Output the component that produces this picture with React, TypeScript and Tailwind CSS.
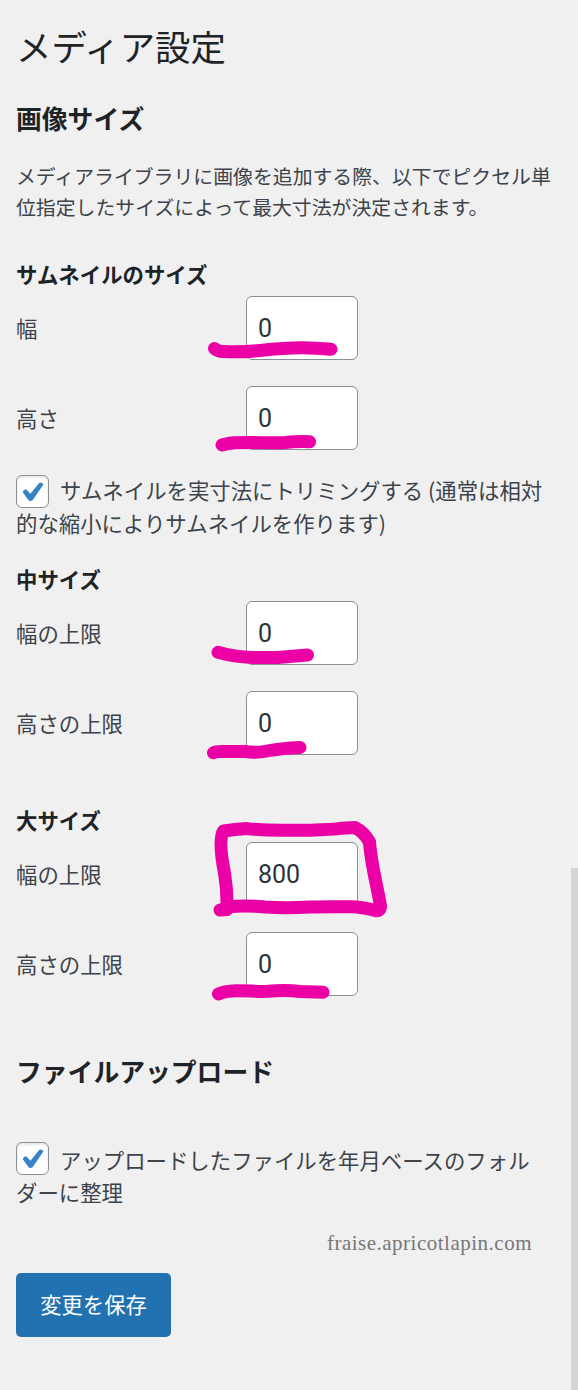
interface SizeFieldProps {
    label: string
    value: string
}

function SizeField({ label, value }: SizeFieldProps) {
    return (
        <label className="flex h-16 items-center">
            <span className="w-[230px] shrink-0 leading-8">{label}</span>
            <input
                type="text"
                defaultValue={value}
                className="h-16 w-[112px] rounded-[6px] border-[1.5px] border-[#8c8f94] bg-white px-[11px] font-[Roboto,sans-serif] text-[25px] text-[#2c3338] outline-none"
            />
        </label>
    )
}

interface SizeGroupProps {
    title: string
    fields: SizeFieldProps[]
}

function SizeGroup({ title, fields }: SizeGroupProps) {
    return (
        <section>
            <h3 className="mb-[6px] text-[21.4px] leading-8 font-bold text-[#1d2327]">{title}</h3>
            <div className="flex flex-col gap-[26px]">
                {fields.map((field) => (
                    <SizeField key={field.label} label={field.label} value={field.value} />
                ))}
            </div>
        </section>
    )
}

function CheckMark() {
    return (
        <span className="mr-[11px] inline-flex h-[33px] w-[33px] items-center justify-center rounded-[6px] border-[1.5px] border-[#8c8f94] bg-white shadow-[inset_0_2px_3px_rgba(0,0,0,0.1)]">
            <svg width="30" height="30" viewBox="0 0 30 30" className="shrink-0">
                <path d="M4.8 15.2 Q5.4 12.4 8.2 12.2 L12.4 16.8 L21.4 5.8 Q24.2 5 25.4 7.6 L14.8 23 Q12.6 25.2 10.4 23 Z" fill="#3582c4" />
            </svg>
        </span>
    )
}

/* Marker strokes drawn over the fields */
const strokes = [
    "M214.5 348.5 Q218 351.8 224 351.5 Q242 352.3 260 350.5 Q285 347.6 303 347.7 Q316 347.8 331 349.3",
    "M222 445 Q227 443.3 235 442.8 C255 442 268 443.2 285 442.5 Q298 441.2 309.5 441.8",
    "M218 652.3 Q234 656.8 252 657.5 L278 657.5 Q292 656.3 307.5 655",
    "M213.5 752.8 Q216 751.3 222 751.4 L245 751.4 Q255 753.5 267 751 Q280 748.5 300 747.5",
    "M220 910 L227 909.5 Q227.5 891 224.5 873 Q218 840 223.5 831 Q235 829.5 247 828.6 Q264 830.5 285 830.3 L310 830.2 Q333 829.7 342 828.2 L355 827.6 Q364 832 369.5 842 C371 864 377 885 380.5 906 Q380.5 911 376 910.7 Q360 906.5 350 906.8 Q325 906.5 310 907 Q285 908.5 265 907 Q245 905 228 906.8",
    "M218.5 994 Q224 991 236 990.7 C249 990.6 257 991.8 268 991.3 Q285 989.5 300 991.5 L323 992.3",
]

function MarkerStrokes() {
    return (
        <svg className="pointer-events-none absolute top-0 left-0" width="578" height="1390" viewBox="0 0 578 1390">
            <g fill="none" stroke="#eb00a5" strokeWidth="13" strokeLinecap="round" strokeLinejoin="round">
                {strokes.map((d) => (
                    <path key={d} d={d} />
                ))}
            </g>
        </svg>
    )
}

export default function App() {
    return (
        <div className="relative flex h-[1390px] w-[578px] overflow-hidden bg-[#f0f0f0] font-['Noto_Sans_CJK_JP',sans-serif] text-[21.4px] text-[#3c434a]">
            <main className="flex flex-1 flex-col pl-4">
                <h1 className="mt-[21px] text-[35.4px] leading-[50px] text-[#1d2327]">メディア設定</h1>
                <h2 className="mt-[27px] text-[25.8px] leading-10 font-bold text-[#1d2327]">画像サイズ</h2>
                <p className="mt-[22px] mb-[36px] text-[19.88px] leading-[31px] whitespace-nowrap">
                    メディアライブラリに画像を追加する際、以下でピクセル単
                    <br />
                    位指定したサイズによって最大寸法が決定されます。
                </p>

                <SizeGroup
                    title="サムネイルのサイズ"
                    fields={[
                        { label: "幅", value: "0" },
                        { label: "高さ", value: "0" },
                    ]}
                />

                <label className="mt-[25px] mb-[24px] block whitespace-nowrap">
                    <span className="flex h-[33px] items-center">
                        <CheckMark />
                        <span className="pb-[2px]">サムネイルを実寸法にトリミングする (通常は相対</span>
                    </span>
                    <span className="-mt-px block pb-px leading-[31px]">的な縮小によりサムネイルを作ります)</span>
                </label>

                <SizeGroup
                    title="中サイズ"
                    fields={[
                        { label: "幅の上限", value: "0" },
                        { label: "高さの上限", value: "0" },
                    ]}
                />
                <div className="h-[49px]" />
                <SizeGroup
                    title="大サイズ"
                    fields={[
                        { label: "幅の上限", value: "800" },
                        { label: "高さの上限", value: "0" },
                    ]}
                />

                <h2 className="mt-[55px] text-[25.8px] leading-10 font-bold text-[#1d2327]">ファイルアップロード</h2>

                <label className="mt-[51px] block whitespace-nowrap">
                    <span className="flex h-[33px] items-center">
                        <CheckMark />
                        <span className="pt-[4px]">アップロードしたファイルを年月ベースのフォル</span>
                    </span>
                    <span className="block pt-px leading-[31px]">ダーに整理</span>
                </label>

                <div className="mt-[21px] mr-[39px] self-end font-['Liberation_Serif',serif] text-[21px] leading-[30px] tracking-[0.5px] text-[#777777]">
                    fraise.apricotlapin.com
                </div>

                <button className="mt-[15px] h-16 w-[155px] rounded-[5px] bg-[#2271b1] pb-[3px] text-[21.3px] text-white">
                    変更を保存
                </button>
            </main>

            {/* Scroll thumb */}
            <div className="mt-[868px] w-[7px] shrink-0 bg-[#d5d5d5]" />

            <MarkerStrokes />
        </div>
    )
}
